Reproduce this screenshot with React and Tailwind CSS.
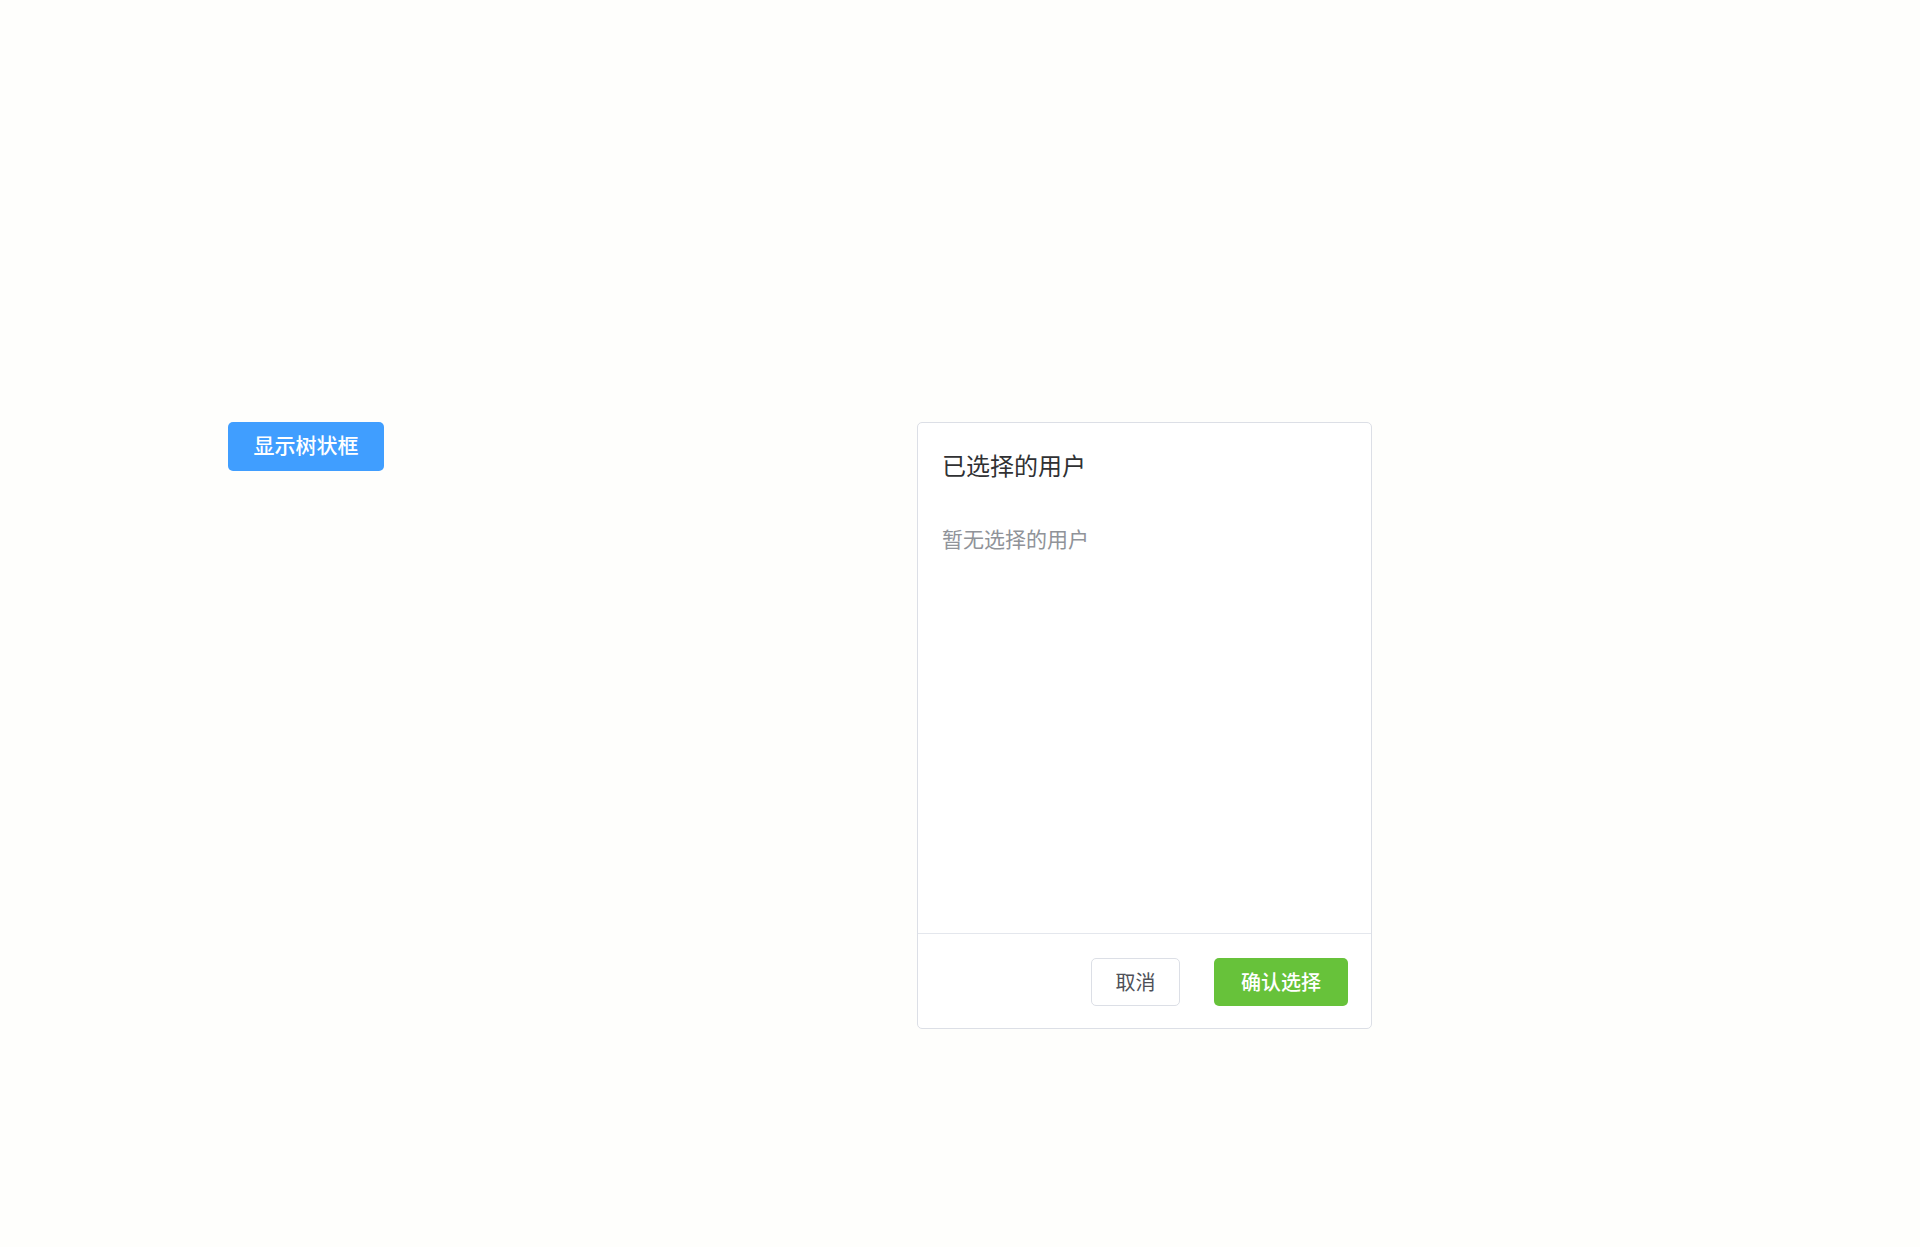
import { useState } from "react";

const font = { fontFamily: '"Noto Sans CJK SC", "Noto Sans", sans-serif' };

const SelectedPanel = ({ users, onCancel, onConfirm }) => {
  return (
    <div className="ml-[533px] flex h-[607px] w-[455px] flex-col rounded-[5px] border border-[#dcdfe6] bg-white">
      <div className="h-[510px] shrink-0 px-6 pt-[26px]">
        <div className="text-[24px] leading-8 text-[#303133]">已选择的用户</div>
        {users.length === 0 ? (
          <div className="mt-[43px] text-[21px] leading-7 text-[#909399]">
            暂无选择的用户
          </div>
        ) : (
          <ul className="mt-6 flex flex-col gap-2">
            {users.map((u) => (
              <li key={u} className="text-[20px] text-[#606266]">
                {u}
              </li>
            ))}
          </ul>
        )}
      </div>
      <div className="flex justify-end gap-[34px] border-t border-[#e4e7ed] pt-6 pr-[23px]">
        <button
          onClick={onCancel}
          className="flex h-12 w-[89px] items-center justify-center rounded-[5px] border border-[#dcdfe6] bg-white text-[20px] text-[#4e5058]"
        >
          取消
        </button>
        <button
          onClick={onConfirm}
          className="flex h-12 w-[134px] items-center justify-center rounded-[5px] bg-[#67c23a] text-[20px] font-medium text-white"
        >
          确认选择
        </button>
      </div>
    </div>
  );
};

export default function App() {
  const [showTree, setShowTree] = useState(false);
  const [users] = useState([]);

  return (
    <div
      className="flex min-h-screen items-start bg-[#fefefc] pt-[422px] pl-[228px]"
      style={font}
    >
      <button
        onClick={() => setShowTree(!showTree)}
        className="flex h-[49px] w-[156px] shrink-0 items-center justify-center rounded-[5px] bg-[#409eff] pb-[3px] text-[21px] font-medium text-white"
      >
        显示树状框
      </button>
      <SelectedPanel users={users} onCancel={() => {}} onConfirm={() => {}} />
    </div>
  );
}
